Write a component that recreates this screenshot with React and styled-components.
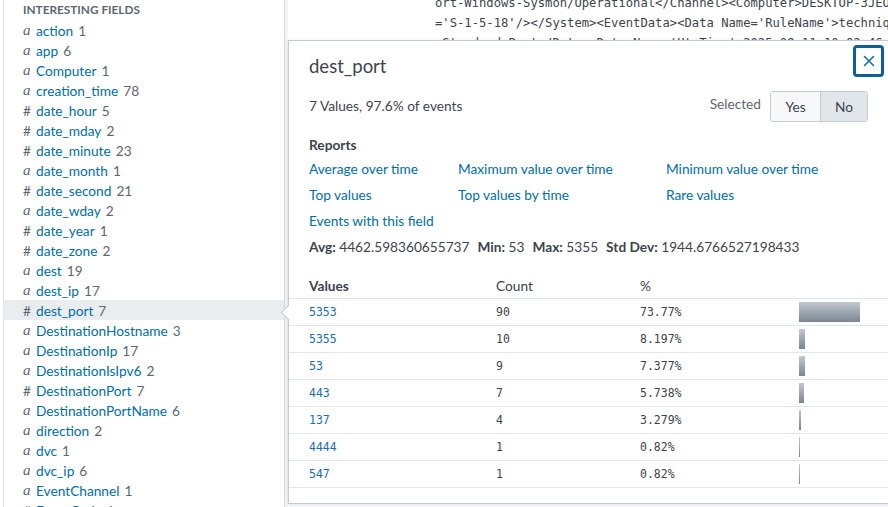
import React from 'react';
import styled, { createGlobalStyle } from 'styled-components';

const Global = createGlobalStyle`
  html, body { margin: 0; padding: 0; background: #fff; overflow: hidden; }
  body { font-family: Lato, "Open Sans", "Liberation Sans", sans-serif; color: #3c444d; }
  * { box-sizing: border-box; }
`;

const Page = styled.div`
  position: relative;
  display: flex;
  width: 888px;
  height: 507px;
  overflow: hidden;
  background: #fff;
`;

const Sidebar = styled.aside`
  flex: 0 0 282px;
  margin-left: 3px;
  border-left: 1px solid #e1e6eb;
  border-right: 1px solid #d5dadf;
  background: #fff;
  overflow: hidden;
`;

const SideHeader = styled.div`
  height: 20px;
  line-height: 20px;
  padding-left: 19px;
  font-size: 11.8px;
  font-weight: 700;
  text-transform: uppercase;
  color: #5c6773;
`;

const FieldRow = styled.div`
  display: flex;
  align-items: center;
  height: 20px;
  padding-left: 19px;
  font-size: 13.7px;
  background: ${p => (p.$active ? '#e9edf0' : 'transparent')};
  white-space: nowrap;
`;

const TypeIcon = styled.span`
  width: 13px;
  flex: 0 0 13px;
  color: #5c6773;
  font-family: ${p => (p.$kind === 'a' ? '"Liberation Serif", serif' : 'Lato, sans-serif')};
  font-style: ${p => (p.$kind === 'a' ? 'italic' : 'normal')};
  font-size: ${p => (p.$kind === 'a' ? '15px' : '13.7px')};
`;

const FieldName = styled.span`
  color: #006eaa;
`;

const FieldCount = styled.span`
  color: #5c6773;
  margin-left: 5px;
`;

const Gutter = styled.div`
  flex: 0 0 3px;
  background: #f2f4f5;
`;

const Main = styled.main`
  flex: 1;
  padding-left: 147px;
  overflow: hidden;
`;

const EventText = styled.pre`
  margin: -7px 0 0;
  font-family: "DejaVu Sans Mono", "Liberation Mono", monospace;
  font-size: 12.2px;
  line-height: 20px;
  color: #3c444d;
  white-space: pre;
`;

const Popover = styled.div`
  position: absolute;
  left: 288px;
  top: 40px;
  width: 612px;
  background: #fff;
  border: 1px solid #c3cbd4;
  box-shadow: 0 1px 4px rgba(0, 0, 0, 0.12);
  padding-bottom: 15px;
`;

const Arrow = styled.span`
  position: absolute;
  left: -6px;
  top: 266px;
  width: 11px;
  height: 11px;
  background: #fff;
  border-left: 1px solid #c3cbd4;
  border-bottom: 1px solid #c3cbd4;
  transform: rotate(45deg);
`;

const PopHeader = styled.div`
  display: flex;
  justify-content: space-between;
  align-items: flex-start;
  padding: 4px 15px 0 20px;
`;

const Title = styled.h2`
  margin: 9px 0 0;
  font-size: 18.5px;
  font-weight: 400;
  line-height: 24px;
  color: #3c444d;
`;

const CloseButton = styled.button`
  width: 31px;
  height: 32px;
  display: flex;
  align-items: center;
  justify-content: center;
  padding: 0;
  background: #fff;
  border: 3px solid #0f5f97;
  border-radius: 4px;
  color: #1a6fa8;
`;

const SummaryRow = styled.div`
  display: flex;
  align-items: center;
  margin-top: 13px;
  padding: 0 31px 0 20px;
  font-size: 13.7px;
`;

const Summary = styled.span`
  flex: 1;
  padding-bottom: 2px;
`;

const SelectedLabel = styled.span`
  color: #5c6773;
  margin-right: 9px;
  padding-bottom: 6px;
`;

const Toggle = styled.div`
  display: flex;
  border: 1px solid #c3cbd4;
  border-radius: 3px;
  overflow: hidden;
`;

const ToggleBtn = styled.button`
  height: 29px;
  width: ${p => p.$w}px;
  border: none;
  border-left: ${p => (p.$first ? 'none' : '1px solid #c3cbd4')};
  background: ${p => (p.$on ? '#e1e6eb' : '#f7f8fa')};
  color: #3c444d;
  font-family: inherit;
  font-size: 13.7px;
  padding: 0;
`;

const SectionTitle = styled.div`
  margin-top: 13px;
  padding-left: 20px;
  font-size: 13.7px;
  font-weight: 700;
  line-height: 20px;
`;

const LinkGrid = styled.div`
  display: grid;
  grid-template-columns: 149px 208px 1fr;
  grid-auto-rows: 26px;
  align-items: center;
  padding-left: 20px;
`;

const ReportLink = styled.a`
  color: #006eaa;
  font-size: 13.7px;
  text-decoration: none;
  white-space: nowrap;
`;

const Stats = styled.div`
  display: flex;
  gap: 8px;
  height: 26px;
  align-items: center;
  padding-left: 20px;
  font-size: 13.7px;
`;

const Stat = styled.span`
  b { font-weight: 700; }
`;

const Table = styled.div`
  margin-top: 13px;
`;

const TRow = styled.div`
  display: grid;
  grid-template-columns: 187px 144px 159px 1fr;
  align-items: center;
  height: 27px;
  padding-left: 20px;
  border-bottom: 1px solid #e1e6eb;
`;

const HeadCell = styled.div`
  font-size: 13.7px;
  font-weight: ${p => (p.$bold ? 700 : 400)};
`;

const Cell = styled.div`
  font-family: "DejaVu Sans Mono", "Liberation Mono", monospace;
  font-size: 11.5px;
  color: ${p => (p.$link ? '#1a6fa8' : '#3c444d')};
`;

const BarCell = styled.div`
  display: flex;
  align-items: center;
`;

const Bar = styled.div`
  height: 20px;
  background: linear-gradient(#c1c8cf, #7b8591);
`;

const fields = [
  ['a', 'action', 1], ['a', 'app', 6], ['a', 'Computer', 1], ['a', 'creation_time', 78],
  ['#', 'date_hour', 5], ['#', 'date_mday', 2], ['#', 'date_minute', 23], ['a', 'date_month', 1],
  ['#', 'date_second', 21], ['a', 'date_wday', 2], ['#', 'date_year', 1], ['#', 'date_zone', 2],
  ['a', 'dest', 19], ['a', 'dest_ip', 17], ['#', 'dest_port', 7], ['a', 'DestinationHostname', 3],
  ['a', 'DestinationIp', 17], ['a', 'DestinationIsIpv6', 2], ['#', 'DestinationPort', 7],
  ['a', 'DestinationPortName', 6], ['a', 'direction', 2], ['a', 'dvc', 1], ['a', 'dvc_ip', 6],
  ['a', 'EventChannel', 1], ['#', 'EventCode', 1],
];

const values = [
  ['5353', 90, '73.77%', 61], ['5355', 10, '8.197%', 6], ['53', 9, '7.377%', 6],
  ['443', 7, '5.738%', 5], ['137', 4, '3.279%', 2], ['4444', 1, '0.82%', 1], ['547', 1, '0.82%', 1],
];

const eventLines = [
  "ort-Windows-Sysmon/Operational</Channel><Computer>DESKTOP-3JEO2VC</Computer><Security UserID",
  "='S-1-5-18'/></System><EventData><Data Name='RuleName'>technique_id=T1571,technique_name=Non",
  " Standard Port</Data><Data Name='UtcTime'>2025-09-11 10:02:46.123</Data><Data Name='ProcessGuid'>",
];

export default function App() {
  return (
    <>
      <Global />
      <Page>
        <Sidebar>
          <SideHeader>Interesting Fields</SideHeader>
          {fields.map(([k, name, n]) => (
            <FieldRow key={name} $active={name === 'dest_port'}>
              <TypeIcon $kind={k}>{k}</TypeIcon>
              <FieldName>{name}</FieldName>
              <FieldCount>{n}</FieldCount>
            </FieldRow>
          ))}
        </Sidebar>
        <Gutter />
        <Main>
          <EventText>{eventLines.join('\n')}</EventText>
        </Main>
        <Popover>
          <Arrow />
          <PopHeader>
            <Title>dest_port</Title>
            <CloseButton aria-label="Close">
              <svg width="12" height="12" viewBox="0 0 12 12">
                <path d="M1.5 1.5 L10.5 10.5 M10.5 1.5 L1.5 10.5" stroke="currentColor" strokeWidth="1.6" strokeLinecap="round" />
              </svg>
            </CloseButton>
          </PopHeader>
          <SummaryRow>
            <Summary>7 Values, 97.6% of events</Summary>
            <SelectedLabel>Selected</SelectedLabel>
            <Toggle>
              <ToggleBtn $first $w={49}>Yes</ToggleBtn>
              <ToggleBtn $on $w={47}>No</ToggleBtn>
            </Toggle>
          </SummaryRow>
          <SectionTitle>Reports</SectionTitle>
          <LinkGrid>
            <ReportLink>Average over time</ReportLink>
            <ReportLink>Maximum value over time</ReportLink>
            <ReportLink>Minimum value over time</ReportLink>
            <ReportLink>Top values</ReportLink>
            <ReportLink>Top values by time</ReportLink>
            <ReportLink>Rare values</ReportLink>
            <ReportLink>Events with this field</ReportLink>
          </LinkGrid>
          <Stats>
            <Stat><b>Avg:</b> 4462.598360655737</Stat>
            <Stat><b>Min:</b> 53</Stat>
            <Stat><b>Max:</b> 5355</Stat>
            <Stat><b>Std Dev:</b> 1944.6766527198433</Stat>
          </Stats>
          <Table>
            <TRow>
              <HeadCell $bold>Values</HeadCell>
              <HeadCell>Count</HeadCell>
              <HeadCell>%</HeadCell>
              <div />
            </TRow>
            {values.map(([v, c, p, w]) => (
              <TRow key={v}>
                <Cell $link>{v}</Cell>
                <Cell>{c}</Cell>
                <Cell>{p}</Cell>
                <BarCell><Bar style={{ width: `${w}px` }} /></BarCell>
              </TRow>
            ))}
          </Table>
        </Popover>
      </Page>
    </>
  );
}
